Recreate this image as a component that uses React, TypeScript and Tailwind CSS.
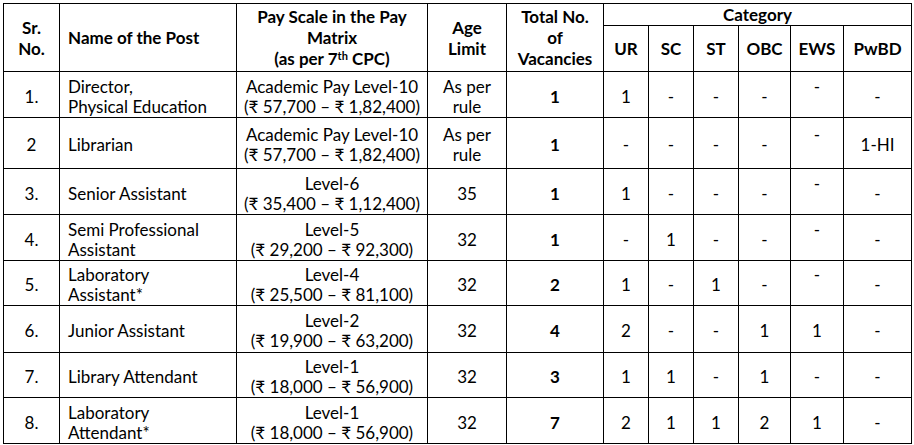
import React from "react";

type Row = {
  sr: string;
  name: React.ReactNode;
  level: string;
  range: string;
  age: React.ReactNode;
  total: string;
  cats: string[];
  ewsUp: boolean;
  h: string;
};

const rows: Row[] = [
  { sr: "1.", name: <>Director,<br />Physical Education</>, level: "Academic Pay Level-10", range: "(₹ 57,700 – ₹ 1,82,400)", age: <>As per<br />rule</>, total: "1", cats: ["1", "-", "-", "-", "-", "-"], ewsUp: true, h: "h-[46px]" },
  { sr: "2", name: "Librarian", level: "Academic Pay Level-10", range: "(₹ 57,700 – ₹ 1,82,400)", age: <>As per<br />rule</>, total: "1", cats: ["-", "-", "-", "-", "-", "1-HI"], ewsUp: true, h: "h-[51px]" },
  { sr: "3.", name: "Senior Assistant", level: "Level-6", range: "(₹ 35,400 – ₹ 1,12,400)", age: "35", total: "1", cats: ["1", "-", "-", "-", "-", "-"], ewsUp: true, h: "h-[46px]" },
  { sr: "4.", name: <>Semi Professional<br />Assistant</>, level: "Level-5", range: "(₹ 29,200 – ₹ 92,300)", age: "32", total: "1", cats: ["-", "1", "-", "-", "-", "-"], ewsUp: true, h: "h-[46px]" },
  { sr: "5.", name: <>Laboratory<br />Assistant*</>, level: "Level-4", range: "(₹ 25,500 – ₹ 81,100)", age: "32", total: "2", cats: ["1", "-", "1", "-", "-", "-"], ewsUp: true, h: "h-[45px]" },
  { sr: "6.", name: "Junior Assistant", level: "Level-2", range: "(₹ 19,900 – ₹ 63,200)", age: "32", total: "4", cats: ["2", "-", "-", "1", "1", "-"], ewsUp: false, h: "h-[47px]" },
  { sr: "7.", name: "Library Attendant", level: "Level-1", range: "(₹ 18,000 – ₹ 56,900)", age: "32", total: "3", cats: ["1", "1", "-", "1", "-", "-"], ewsUp: false, h: "h-[45px]" },
  { sr: "8.", name: <>Laboratory<br />Attendant*</>, level: "Level-1", range: "(₹ 18,000 – ₹ 56,900)", age: "32", total: "7", cats: ["2", "1", "1", "2", "1", "-"], ewsUp: false, h: "h-[46px]" },
];

const cell = "border-[1.5px] border-black p-0 align-middle";
const bcell = "border-[1.5px] border-black px-0 pb-0 pt-[4px] align-middle";

export default function App() {
  return (
    <div className="bg-white w-[914px] h-[445px] pl-[3px] pt-[3px] text-black" style={{ fontFamily: "Lato, 'Noto Sans', sans-serif" }}>
      <table className="table-fixed border-collapse w-[908px] text-[17px] leading-[20px]">
        <colgroup>
          <col className="w-[56px]" />
          <col className="w-[177px]" />
          <col className="w-[191px]" />
          <col className="w-[79px]" />
          <col className="w-[97px]" />
          <col className="w-[45px]" />
          <col className="w-[45px]" />
          <col className="w-[45px]" />
          <col className="w-[52px]" />
          <col className="w-[53px]" />
          <col className="w-[68px]" />
        </colgroup>
        <thead className="font-bold leading-[21px]">
          <tr className="h-[22px]">
            <th rowSpan={2} className={`${cell} text-center`}>Sr.<br />No.</th>
            <th rowSpan={2} className={`${cell} text-left pl-[8px]`}>Name of the Post</th>
            <th rowSpan={2} className={`${cell} text-center`}>
              Pay Scale in the Pay<br />Matrix<br />(as per 7<sup className="text-[11px]">th</sup> CPC)
            </th>
            <th rowSpan={2} className={`${cell} text-center`}>Age<br />Limit</th>
            <th rowSpan={2} className={`${cell} text-center`}>Total No.<br />of<br />Vacancies</th>
            <th colSpan={6} className={`${cell} text-center`}>Category</th>
          </tr>
          <tr className="h-[46px]">
            {["UR", "SC", "ST", "OBC", "EWS", "PwBD"].map((c) => (
              <th key={c} className={`${cell} text-center`}>{c}</th>
            ))}
          </tr>
        </thead>
        <tbody>
          {rows.map((r, i) => (
            <tr key={i} className={r.h}>
              <td className={`${bcell} text-center`}>{r.sr}</td>
              <td className={`${bcell} text-left pl-[8px]`}>{r.name}</td>
              <td className={`${bcell} text-center`}>{r.level}<br />{r.range}</td>
              <td className={`${bcell} text-center`}>{r.age}</td>
              <td className={`${bcell} text-center font-bold`}>{r.total}</td>
              {r.cats.map((c, j) => (
                <td key={j} className={`${bcell} text-center`}>
                  {j === 4 && r.ewsUp ? (
                    <>
                      {c}
                      <br />
                      {"\u00a0"}
                    </>
                  ) : (
                    c
                  )}
                </td>
              ))}
            </tr>
          ))}
        </tbody>
      </table>
    </div>
  );
}
